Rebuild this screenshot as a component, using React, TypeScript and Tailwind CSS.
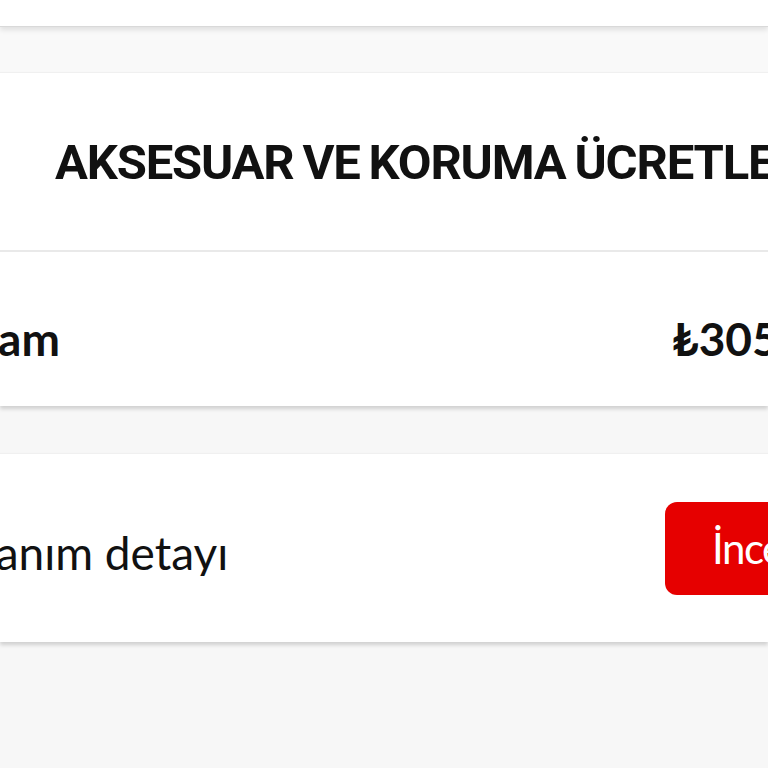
export default function App() {
  return (
    <div className="w-[768px] h-[768px] overflow-hidden bg-[#f7f7f7] font-['Lato',sans-serif] text-[#111111]">
      <div className="relative z-10 h-[27px] bg-white border-b border-[#d9d9d9] shadow-[0_3px_5px_rgba(0,0,0,0.10)]" />
      <div className="h-[45px] bg-[#f9f9f9]" />
      <div className="relative bg-white border-t border-[#f0f0f0] shadow-[0_3px_4px_rgba(0,0,0,0.16)]">
        <div className="h-[177px] flex items-center pl-[55px] pt-[2px] whitespace-nowrap font-['Roboto',sans-serif] text-[49px] font-bold leading-none tracking-[-1.2px] [word-spacing:-2px]">
          AKSESUAR VE KORUMA ÜCRETLERİ
        </div>
        <div className="h-[2px] bg-[#e9e9e9]" />
        <div className="h-[154px] flex items-center whitespace-nowrap text-[46px] font-bold leading-none pt-[20px]">
          <div className="w-[672px] shrink-0 overflow-hidden">
            <span className="block ml-[-88px]">Toplam</span>
          </div>
          <span className="shrink-0">₺305,00</span>
        </div>
      </div>
      <div className="h-[47px]" />
      <div className="relative bg-white border-t border-[#f0f0f0] shadow-[0_3px_4px_rgba(0,0,0,0.16)]">
        <div className="h-[188px] flex items-center whitespace-nowrap">
          <div className="w-[665px] shrink-0 overflow-hidden text-[46px] font-normal leading-none pt-[10px]">
            <span className="block ml-[-81px]">Kullanım detayı</span>
          </div>
          <button className="shrink-0 h-[93px] w-[220px] rounded-[12px] bg-[#e60000] text-white text-[42px] leading-none text-left pl-[47px] tracking-[-1.5px]">
            İncele
          </button>
        </div>
      </div>
    </div>
  );
}
